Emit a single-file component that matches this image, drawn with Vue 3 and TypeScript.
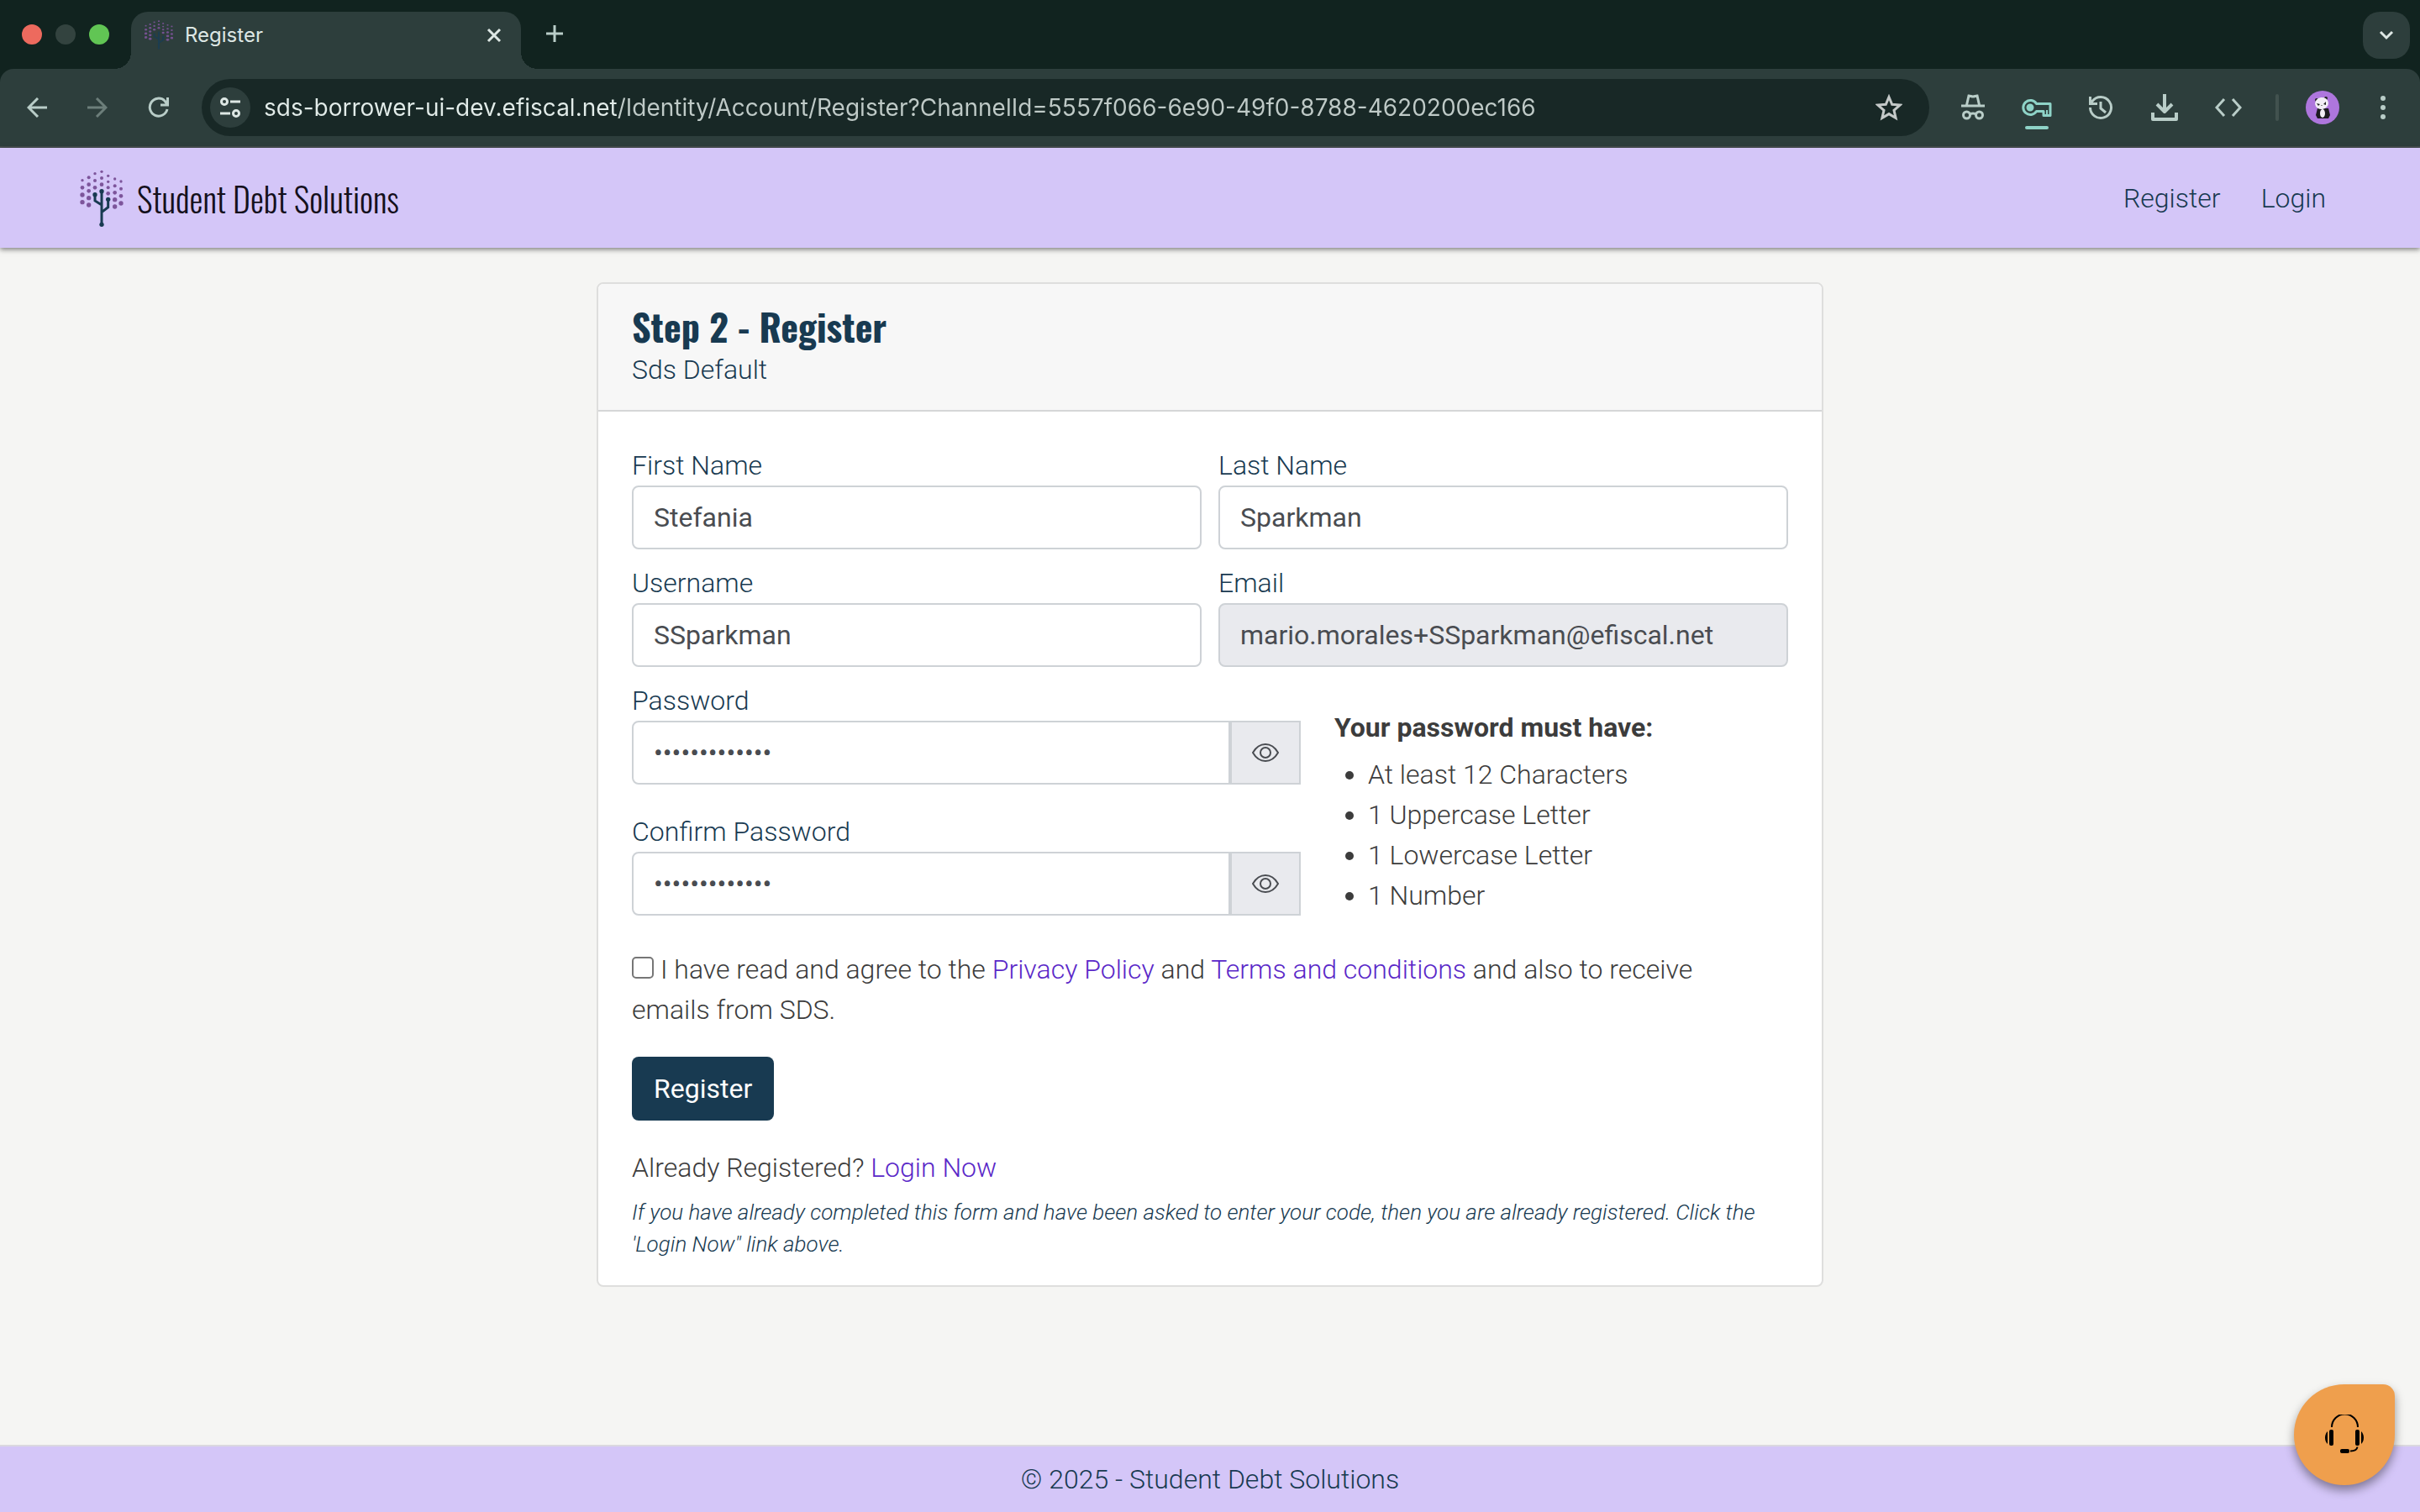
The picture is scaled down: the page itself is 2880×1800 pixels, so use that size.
<script setup lang="ts">
import { reactive, ref } from 'vue'

type Dot = [x: number, y: number, r: number]

const leafDots: Dot[] = [
  [55, 72, 5], [55, 98, 7], [55, 124, 8], [55, 150, 8],
  [78, 62, 6], [78, 87, 7], [78, 110, 7], [78, 135, 8], [78, 160, 8],
  [100, 48, 5], [100, 73, 6], [100, 98, 7],
  [124, 41, 5], [124, 64, 6], [124, 87, 7],
  [147, 56, 5], [147, 77, 5], [147, 98, 6], [147, 119, 7],
  [171, 67, 5], [171, 92, 6], [171, 116, 7], [171, 141, 8], [171, 166, 8],
  [193, 76, 5], [193, 102, 6], [193, 128, 7], [193, 154, 8],
]
const trunkDots: Dot[] = [[100, 123, 8], [124, 111, 8], [147, 140, 8], [124, 230, 8]]

const url = ref('sds-borrower-ui-dev.efiscal.net/Identity/Account/Register?ChannelId=5557f066-6e90-49f0-8788-4620200ec166')

const form = reactive({
  firstName: 'Stefania',
  lastName: 'Sparkman',
  username: 'SSparkman',
  email: 'mario.morales+SSparkman@efiscal.net',
  password: 'Abcdefghijk12',
  confirm: 'Abcdefghijk12',
  agreed: false,
})
const visible = reactive({ password: false, confirm: false })

const requirements = ['At least 12 Characters', '1 Uppercase Letter', '1 Lowercase Letter', '1 Number']
</script>

<template>
  <div class="window">
    <header class="browser">
      <div class="tabstrip">
        <div class="lights">
          <span class="light red"></span>
          <span class="light grey"></span>
          <span class="light green"></span>
        </div>
        <div class="tab">
          <svg class="favicon" viewBox="48 34 152 204" preserveAspectRatio="none" aria-hidden="true">
            <circle v-for="(d, i) in leafDots" :key="i" :cx="d[0]" :cy="d[1]" :r="d[2]" fill="#74518f" />
            <path d="M124 111V230M100 123V145L124 160M147 140V168L124 186" fill="none" stroke="#1c3d50" stroke-width="9" />
          </svg>
          <span class="tab-title">Register</span>
          <button class="icon-button tab-close" aria-label="Close tab">
            <svg width="20" height="20" viewBox="0 0 20 20"><path d="M3 3l14 14M17 3L3 17" stroke="currentColor" stroke-width="3" /></svg>
          </button>
        </div>
        <button class="icon-button new-tab" aria-label="New tab">
          <svg width="20" height="20" viewBox="0 0 20 20"><path d="M10 0v20M0 10h20" stroke="currentColor" stroke-width="3" /></svg>
        </button>
        <button class="icon-button tab-search" aria-label="Search tabs">
          <svg width="20" height="20" viewBox="0 0 20 20"><path d="M3 6l7 7 7-7" fill="none" stroke="currentColor" stroke-width="3" /></svg>
        </button>
      </div>

      <div class="toolbar">
        <div class="nav-buttons">
          <button class="icon-button" aria-label="Back">
            <svg width="24" height="24" viewBox="0 0 24 24"><path d="M24 12H3M13 1L2 12l11 11" fill="none" stroke="currentColor" stroke-width="3" /></svg>
          </button>
          <button class="icon-button dim" aria-label="Forward">
            <svg width="24" height="24" viewBox="0 0 24 24"><path d="M0 12h21M11 1l11 11-11 11" fill="none" stroke="currentColor" stroke-width="3" /></svg>
          </button>
          <button class="icon-button" aria-label="Reload">
            <svg width="26" height="26" viewBox="0 0 26 26"><path d="M23 15A10.500 10.500 0 1 1 20 5l3 4M23.500 1v9H15" fill="none" stroke="currentColor" stroke-width="3" /></svg>
          </button>
        </div>
        <div class="address">
          <button class="icon-button site-info" aria-label="Site information">
            <svg width="28" height="28" viewBox="0 0 28 28" fill="none" stroke="currentColor" stroke-width="3">
              <circle cx="7" cy="7" r="3.500" /><path d="M14 7h12M2 21h12" /><circle cx="21" cy="21" r="3.500" />
            </svg>
          </button>
          <input v-model="url" class="url" type="text" aria-label="Address" spellcheck="false" />
          <button class="icon-button star" aria-label="Bookmark">
            <svg width="32" height="32" viewBox="0 0 32 32"><path d="M16 3.500l3.700 8.800 9.400.8-7.100 6.200 2.100 9.200-8.100-4.900-8.100 4.900L10 19.300l-7.100-6.200 9.400-.8z" fill="none" stroke="currentColor" stroke-width="3" /></svg>
          </button>
        </div>
        <div class="extensions">
          <button class="icon-button" aria-label="Incognito">
            <svg width="32" height="36" viewBox="0 0 32 36" fill="none" stroke="currentColor" stroke-width="3">
              <path d="M2 16h28M8.500 15l2.500-11c2 0 3 1 5 1s3-1 5-1l2.500 11" /><circle cx="8.500" cy="27" r="4" /><circle cx="23.500" cy="27" r="4" /><path d="M12 26q4-2 8 0" />
            </svg>
          </button>
          <button class="icon-button key" aria-label="Passwords">
            <svg width="36" height="28" viewBox="0 0 36 28" fill="none" stroke="currentColor" stroke-width="3">
              <path d="M17.500 9.500H34v14h-8v-5h-8.500A8.500 8.500 0 1 1 17.500 9.500z" stroke-linejoin="round" /><circle cx="10" cy="14" r="3" fill="currentColor" /><path d="M30 17v5" stroke-width="2" />
            </svg>
          </button>
          <button class="icon-button" aria-label="History">
            <svg width="30" height="30" viewBox="0 0 30 30" fill="none" stroke="currentColor" stroke-width="3">
              <path d="M2.500 15A12.500 12.500 0 1 0 5 7.500L2.500 10M2.500 2v8.500H11M15 8v8l6 5" />
            </svg>
          </button>
          <button class="icon-button" aria-label="Downloads">
            <svg width="32" height="32" viewBox="0 0 32 32" fill="none" stroke="currentColor" stroke-width="4">
              <path d="M16 0v21M7 12l9 9 9-9M2 22v8h28v-8" stroke-linejoin="round" />
            </svg>
          </button>
          <button class="icon-button" aria-label="Developer tools">
            <svg width="32" height="24" viewBox="0 0 32 24" fill="none" stroke="currentColor" stroke-width="3">
              <path d="M11 2L2 12l9 10M21 2l9 10-9 10" />
            </svg>
          </button>
          <span class="divider"></span>
        </div>
        <div class="profile">
          <button class="icon-button" aria-label="Profile">
            <svg width="40" height="40" viewBox="0 0 40 40">
              <circle cx="20" cy="20" r="20" fill="#ae76dd" />
              <circle cx="13" cy="11" r="2" fill="#222" /><circle cx="24" cy="9" r="2" fill="#222" />
              <path d="M14 21h13l2 8-2 4H14l-2-4z" fill="#1d1b20" />
              <ellipse cx="20" cy="27" rx="3" ry="5" fill="#f2eef5" />
              <ellipse cx="19" cy="15" rx="8" ry="7" fill="#f2eef5" transform="rotate(-8 19 15)" />
              <path d="M13 15l4 1-2 2zM24 13l-3 3 3 1zM18 17h2l-1 1z" fill="#222" />
            </svg>
          </button>
          <button class="icon-button" aria-label="Menu">
            <svg width="8" height="28" viewBox="0 0 8 28" fill="currentColor"><circle cx="4" cy="3" r="3" /><circle cx="4" cy="14" r="3" /><circle cx="4" cy="25" r="3" /></svg>
          </button>
        </div>
      </div>
    </header>

    <nav class="site-nav">
      <a class="brand" href="#">
        <svg class="brand-logo" viewBox="46 34 156 204" aria-hidden="true">
          <circle v-for="(d, i) in leafDots" :key="'l' + i" :cx="d[0]" :cy="d[1]" :r="d[2]" fill="#7d559b" />
          <circle v-for="(d, i) in trunkDots" :key="'t' + i" :cx="d[0]" :cy="d[1]" :r="d[2]" fill="#183a51" />
          <path d="M124 111V230M100 123V145L124 160M147 140V168L124 186" fill="none" stroke="#183a51" stroke-width="9" />
        </svg>
        <span class="brand-name">Student Debt Solutions</span>
      </a>
      <div class="site-links">
        <a href="#">Register</a>
        <a href="#">Login</a>
      </div>
    </nav>

    <main class="content">
      <section class="card">
        <div class="card-header">
          <h1>Step 2 - Register</h1>
          <p>Sds Default</p>
        </div>
        <form class="card-body" @submit.prevent>
          <div class="row">
            <div class="field">
              <label for="first-name">First Name</label>
              <input id="first-name" v-model="form.firstName" type="text" />
            </div>
            <div class="field">
              <label for="last-name">Last Name</label>
              <input id="last-name" v-model="form.lastName" type="text" />
            </div>
          </div>
          <div class="row">
            <div class="field">
              <label for="username">Username</label>
              <input id="username" v-model="form.username" type="text" />
            </div>
            <div class="field">
              <label for="email">Email</label>
              <input id="email" v-model="form.email" type="email" readonly />
            </div>
          </div>
          <div class="password-row">
            <div class="passwords">
              <div class="field">
                <label for="password">Password</label>
                <div class="group">
                  <input id="password" v-model="form.password" :type="visible.password ? 'text' : 'password'" />
                  <button type="button" class="reveal" aria-label="Show password" @click="visible.password = !visible.password">
                    <svg width="32" height="24" viewBox="0 0 32 24" fill="none" stroke="currentColor" stroke-width="2">
                      <path d="M1 12C5 5 10 2 16 2s11 3 15 10c-4 7-9 10-15 10S5 19 1 12z" /><circle cx="16" cy="12" r="6" />
                    </svg>
                  </button>
                </div>
              </div>
              <div class="field">
                <label for="confirm">Confirm Password</label>
                <div class="group">
                  <input id="confirm" v-model="form.confirm" :type="visible.confirm ? 'text' : 'password'" />
                  <button type="button" class="reveal" aria-label="Show password" @click="visible.confirm = !visible.confirm">
                    <svg width="32" height="24" viewBox="0 0 32 24" fill="none" stroke="currentColor" stroke-width="2">
                      <path d="M1 12C5 5 10 2 16 2s11 3 15 10c-4 7-9 10-15 10S5 19 1 12z" /><circle cx="16" cy="12" r="6" />
                    </svg>
                  </button>
                </div>
              </div>
            </div>
            <div class="rules">
              <strong>Your password must have:</strong>
              <ul>
                <li v-for="rule in requirements" :key="rule">{{ rule }}</li>
              </ul>
            </div>
          </div>
          <p class="agree">
            <input id="agree" v-model="form.agreed" type="checkbox" />
            <label for="agree">I have read and agree to the <a href="#">Privacy Policy</a> and <a href="#">Terms and conditions</a> and also to receive emails from SDS.</label>
          </p>
          <button class="submit" type="submit">Register</button>
          <p>Already Registered? <a href="#">Login Now</a></p>
          <p class="note">If you have already completed this form and have been asked to enter your code, then you are already registered. Click the 'Login Now" link above.</p>
        </form>
      </section>
    </main>

    <footer class="site-footer">© 2025 - Student Debt Solutions</footer>

    <button class="support" aria-label="Support">
      <svg width="48" height="48" viewBox="0 0 48 48">
        <path d="M9 15a15.500 15.500 0 0 1 31 0" fill="none" stroke="#000" stroke-width="2" />
        <rect x="6" y="18" width="5" height="19" rx="2" /><rect x="37" y="18" width="5" height="19" rx="2" />
        <path d="M4 20v15q-3-3-3-7.500T4 20zM44 20v15q3-3 3-7.500T44 20z" />
        <rect x="19" y="41" width="11" height="5" rx="2" />
        <path d="M31 43.500c5 0 8-1 8.500-5" fill="none" stroke="#000" stroke-width="2" />
      </svg>
    </button>
  </div>
</template>

<style>
body {
  margin: 0;
}
</style>

<style scoped>
* {
  box-sizing: border-box;
}

.window {
  display: flex;
  flex-direction: column;
  min-height: 100vh;
  background: #f5f5f3;
  color: #3c3c3c;
  font: 300 32px/48px Roboto, "Liberation Sans", sans-serif;
}

h1,
p,
ul {
  margin: 0;
}

a {
  color: #5a28c8;
  text-decoration: none;
}

button,
input {
  margin: 0;
  font-family: inherit;
}

svg {
  display: block;
  flex: none;
}

/* Browser frame */
.browser {
  background: #11231f;
  border-bottom: 2px solid #464f50;
}

.tabstrip {
  display: flex;
  height: 82px;
  padding: 14px 12px 0 26px;
}

.lights {
  display: flex;
  gap: 16px;
  margin: 15px 26px 0 0;
}

.light {
  width: 24px;
  height: 24px;
  border-radius: 50%;
}

.red {
  background: #ed6a5e;
}

.grey {
  background: #33433f;
}

.green {
  background: #61c554;
}

.tab {
  position: relative;
  display: flex;
  align-items: center;
  width: 464px;
  padding: 0 20px 12px 16px;
  border-radius: 20px 20px 0 0;
  background: #2d3e3c;
}

.tab::before,
.tab::after {
  content: "";
  position: absolute;
  bottom: 0;
  width: 20px;
  height: 20px;
}

.tab::before {
  right: 100%;
  background: radial-gradient(circle at 0 0, transparent 20px, #2d3e3c 20px);
}

.tab::after {
  left: 100%;
  background: radial-gradient(circle at 100% 0, transparent 20px, #2d3e3c 20px);
}

.favicon {
  width: 34px;
  height: 36px;
}

.tab-title {
  margin-left: 14px;
  color: #dde7e4;
  font: 400 24px/32px Inter, sans-serif;
}

.icon-button {
  display: flex;
  align-items: center;
  justify-content: center;
  padding: 0;
  border: 0;
  background: none;
  color: #b9cdc8;
}

.tab-close {
  margin-left: auto;
  width: 24px;
  height: 24px;
  color: #dde7e4;
}

.new-tab {
  width: 56px;
  height: 52px;
  margin-left: 12px;
}

.tab-search {
  width: 56px;
  height: 56px;
  margin-left: auto;
  border-radius: 20px;
  background: #2d3e3c;
  color: #dde7e4;
}

.toolbar {
  display: flex;
  align-items: center;
  height: 92px;
  padding: 0 24px 0 32px;
  border-radius: 16px 16px 0 0;
  background: #2d3e3c;
}

.nav-buttons {
  display: flex;
  align-items: center;
  gap: 48px;
  margin-right: 38px;
}

.dim {
  color: #6c7e7a;
}

.address {
  display: flex;
  flex: 1;
  align-items: center;
  height: 68px;
  padding: 0 32px 0 10px;
  border-radius: 34px;
  background: #182826;
}

.site-info {
  width: 48px;
  height: 48px;
  border-radius: 50%;
  background: #2d3e3c;
  color: #dde7e4;
}

/* The host is brighter than the path that follows it */
.url {
  flex: 1;
  height: 48px;
  padding: 0;
  margin-left: 16px;
  border: 0;
  outline: 0;
  background: linear-gradient(90deg, #e2ece9 420px, #bfcac7 420px);
  background-clip: text;
  color: transparent;
  font: 400 28px/48px Inter, sans-serif;
}

.star {
  color: #c4c9c8;
}

.extensions {
  display: flex;
  align-items: center;
  gap: 36px;
  margin-left: 32px;
}

.extensions .icon-button,
.profile .icon-button {
  width: 40px;
}

.profile {
  display: flex;
  align-items: center;
  gap: 32px;
  margin-left: 32px;
}

.key {
  position: relative;
}

.extensions .key {
  color: #8ed3c7;
}

.key::after {
  content: "";
  position: absolute;
  top: 36px;
  left: 6px;
  width: 28px;
  height: 4px;
  border-radius: 2px;
  background: #8ed3c7;
}

.divider {
  width: 4px;
  height: 32px;
  border-radius: 2px;
  background: #42524f;
}

/* Site header */
.site-nav {
  display: flex;
  align-items: center;
  justify-content: space-between;
  height: 119px;
  padding: 0 112px 0 95px;
  background: #d4c6f8;
  box-shadow: 0 2px 6px rgba(0, 0, 0, 0.5);
}

.brand {
  display: flex;
  align-items: center;
  gap: 16px;
  color: #14101c;
}

.brand-logo {
  width: 52px;
  height: 68px;
}

.brand-name {
  font: 300 40px/60px Oswald, Roboto, sans-serif;
}

.site-links {
  display: flex;
  gap: 48px;
}

.site-links a {
  color: #183a51;
}

/* Registration card */
.content {
  flex: 1;
  padding: 41px 40px;
}

.card {
  max-width: 1460px;
  margin: 0 auto;
  border: 2px solid #dededd;
  border-radius: 8px;
  background: #fff;
}

.card-header {
  padding: 24px 40px;
  border-bottom: 2px solid #d5d6d7;
  border-radius: 6px 6px 0 0;
  background: #f7f7f7;
  color: #183a51;
}

h1 {
  font: 700 44px/54px Oswald, Roboto, sans-serif;
}

.card-body {
  padding: 40px 40px 30px;
}

.row {
  display: grid;
  grid-template-columns: 1fr 1fr;
  gap: 20px;
  margin-bottom: 16px;
}

.field {
  display: flex;
  flex-direction: column;
}

.field label {
  color: #183a51;
}

.field input {
  width: 100%;
  height: 76px;
  padding: 0 24px;
  border: 2px solid #ced2d6;
  border-radius: 8px;
  background: #fff;
  color: #494c51;
  font: 400 32px/48px Roboto, sans-serif;
}

.field input[readonly] {
  background: #e9eaee;
}

.password-row {
  display: grid;
  grid-template-columns: 796fr 540fr;
  column-gap: 40px;
}

.passwords {
  display: flex;
  flex-direction: column;
  gap: 32px;
}

.field .group {
  display: flex;
}

.field .group input {
  flex: 1;
  min-width: 0;
  border-radius: 8px 0 0 8px;
}

.reveal {
  display: flex;
  align-items: center;
  justify-content: center;
  width: 84px;
  padding: 0;
  border: 2px solid #ced2d6;
  background: #e9eaee;
  color: #494c51;
}

.rules {
  padding-top: 32px;
}

.rules strong {
  display: block;
  margin-bottom: 8px;
  font-weight: 700;
}

.rules ul {
  padding-left: 40px;
}

.agree {
  margin-top: 40px;
  padding-right: 40px;
}

.agree input {
  appearance: none;
  width: 26px;
  height: 26px;
  margin-right: 8px;
  border: 2px solid #767676;
  border-radius: 5px;
  background: #fff;
}

.submit {
  display: block;
  height: 76px;
  margin: 32px 0;
  padding: 0 26px;
  border: 0;
  border-radius: 8px;
  background: #183a51;
  color: #fff;
  font-size: 32px;
  font-weight: 400;
}

.note {
  margin-top: 10px;
  color: #183a51;
  font-size: 26px;
  font-style: italic;
  line-height: 38px;
}

.site-footer {
  height: 80px;
  border-top: 2px solid #dbd8df;
  background: #d4c6f8;
  color: #183a51;
  line-height: 78px;
  text-align: center;
}

.support {
  position: fixed;
  right: 30px;
  bottom: 32px;
  display: flex;
  align-items: center;
  justify-content: center;
  width: 120px;
  height: 120px;
  padding: 0;
  border: 0;
  border-radius: 60px 14px 60px 60px;
  background: #ef9f4d;
  box-shadow: 0 6px 12px rgba(0, 0, 0, 0.4);
}
</style>
